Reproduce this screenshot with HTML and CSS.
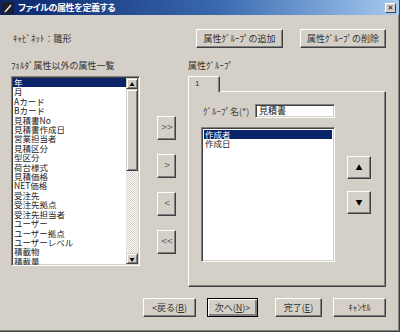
FILE: index.html
```html
<!DOCTYPE html>
<html>
<head>
  <meta charset="utf-8">
  <title>ファイルの属性を定義する</title>
  <link rel="stylesheet" href="styles.css">
</head>
<body>
  <div class="window">
    <div class="titlebar">
      <svg class="app-icon" width="12" height="12" viewBox="0 0 12 12">
        <rect width="12" height="12" fill="#1c1c2a"/>
        <path d="M3 10 L9 3" stroke="#e8e8f0" stroke-width="1.6"/>
        <path d="M2.5 10.5 L3.5 9" stroke="#a0a0c0" stroke-width="1"/>
      </svg>
      <span class="title">ファイルの属性を定義する</span>
      <span class="close">&#x2715;</span>
    </div>

    <div class="body">
      <div class="top-row">
        <span class="cabinet">ｷｬﾋﾞﾈｯﾄ：雛形</span>
        <button class="btn group-add">属性ｸﾞﾙｰﾌﾟの追加</button>
        <button class="btn group-del">属性ｸﾞﾙｰﾌﾟの削除</button>
      </div>

      <div class="main">
        <div class="col-left">
          <div class="label">ﾌｫﾙﾀﾞ属性以外の属性一覧</div>
          <div class="listbox attr-list">
            <ul class="items">
              <li class="selected">年</li>
              <li>月</li>
              <li>Aカード</li>
              <li>Bカード</li>
              <li>見積書No</li>
              <li>見積書作成日</li>
              <li>営業担当者</li>
              <li>見積区分</li>
              <li>型区分</li>
              <li>荷台様式</li>
              <li>見積価格</li>
              <li>NET価格</li>
              <li>受注先</li>
              <li>受注先拠点</li>
              <li>受注先担当者</li>
              <li>ユーザー</li>
              <li>ユーザー拠点</li>
              <li>ユーザーレベル</li>
              <li>積載物</li>
              <li>積載量</li>
            </ul>
            <div class="scrollbar">
              <div class="sb-btn">&#9650;</div>
              <div class="sb-thumb"></div>
              <div class="sb-track"></div>
              <div class="sb-btn">&#9660;</div>
            </div>
          </div>
        </div>

        <div class="col-arrows">
          <button class="btn move">&gt;&gt;</button>
          <button class="btn move">&gt;</button>
          <button class="btn move">&lt;</button>
          <button class="btn move">&lt;&lt;</button>
        </div>

        <div class="col-right">
          <div class="label">属性ｸﾞﾙｰﾌﾟ</div>
          <div class="tabs">
            <div class="tab">1</div>
          </div>
          <div class="panel">
            <div class="name-row">
              <span class="name-label">ｸﾞﾙｰﾌﾟ名(*)</span>
              <div class="textbox">見積書</div>
            </div>
            <div class="panel-main">
              <div class="listbox group-list">
                <ul class="items">
                  <li class="selected">作成者</li>
                  <li>作成日</li>
                </ul>
              </div>
              <div class="updown">
                <button class="btn order">&#9650;</button>
                <button class="btn order">&#9660;</button>
              </div>
            </div>
          </div>
        </div>
      </div>

      <div class="footer">
        <button class="btn back">&lt;戻る(<u>B</u>)</button>
        <button class="btn next default">次へ(<u>N</u>)&gt;</button>
        <button class="btn finish">完了(<u>E</u>)</button>
        <button class="btn cancel">ｷｬﾝｾﾙ</button>
      </div>
    </div>
  </div>
</body>
</html>
```

FILE: styles.css
```css
body {
  margin: 0;
  background-color: #d4d0c8;
  font-family: "Noto Sans CJK JP", "Liberation Sans", sans-serif;
  font-size: 9px;
  color: #222;
}
.window {
  width: 400px;
  height: 332px;
  box-sizing: border-box;
  background: #d4d0c8;
  border-right: 1px solid #404040;
  border-bottom: 1px solid #404040;
  box-shadow: inset -1px -1px #808080;
  display: flex;
  flex-direction: column;
}

/* title bar */
.titlebar {
  height: 15px;
  display: flex;
  align-items: center;
  background: linear-gradient(to right, #0a246a, #3a6ab0 55%, #a6caf0);
  color: #fff;
}
.app-icon {
  margin: 0 4px 0 2px;
}
.title {
  font-weight: bold;
  font-size: 9px;
  font-feature-settings: "palt";
  letter-spacing: -0.4px;
}
.close {
  margin-left: auto;
  margin-right: 3px;
  width: 11px;
  height: 10px;
  box-sizing: border-box;
  background: #d4d0c8;
  color: #000;
  font-size: 7px;
  line-height: 8px;
  text-align: center;
  font-family: "DejaVu Sans", sans-serif;
  font-weight: bold;
  border: 1px solid;
  border-color: #fff #404040 #404040 #fff;
}

/* buttons */
.btn {
  box-sizing: border-box;
  margin: 0;
  padding: 0;
  background: #d4d0c8;
  border: 1px solid;
  border-color: #fff #404040 #404040 #fff;
  box-shadow: inset -1px -1px #808080;
  font-family: inherit;
  font-size: 9px;
  color: #333;
  line-height: 1;
}
.btn u {
  text-decoration: underline;
}
.btn.default {
  border: 1px solid #000;
  box-shadow: inset 1px 1px #fff, inset -2px -2px #808080, inset -1px -1px #404040;
}

.body {
  flex: 1;
  display: flex;
  flex-direction: column;
}

.top-row {
  display: flex;
  align-items: center;
  margin-top: 14px;
  height: 19px;
}
.cabinet {
  margin-left: 13px;
  width: 183px;
  color: #333;
}
.group-add {
  width: 87px;
  height: 19px;
}
.group-del {
  width: 86px;
  height: 19px;
  margin-left: 17px;
}

/* main area */
.main {
  display: flex;
  margin-top: 12px;
}
.label {
  height: 12px;
  line-height: 12px;
  margin-bottom: 4px;
  color: #333;
  white-space: nowrap;
}
.col-left {
  margin-left: 11px;
  width: 129px;
}
.listbox {
  box-sizing: border-box;
  background: #fff;
  border: 1px solid;
  border-color: #808080 #fff #fff #808080;
  box-shadow: inset 1px 1px #404040, inset -1px -1px #d4d0c8;
  overflow: hidden;
}
.items {
  list-style: none;
  margin: 0;
  padding: 0;
  font-size: 8.5px;
  line-height: 9.4px;
  color: #222;
}
.items li {
  padding-left: 1px;
  white-space: nowrap;
}
.items li.selected {
  background: #0a246a;
  color: #fff;
}
.attr-list {
  height: 190px;
  display: flex;
  padding: 1px;
}
.attr-list .items {
  flex: 1;
}
.scrollbar {
  width: 12px;
  display: flex;
  flex-direction: column;
}
.sb-btn,
.sb-thumb {
  box-sizing: border-box;
  background: #d4d0c8;
  border: 1px solid;
  border-color: #d4d0c8 #404040 #404040 #d4d0c8;
  box-shadow: inset 1px 1px #fff, inset -1px -1px #808080;
}
.sb-btn {
  height: 11px;
  font-size: 5px;
  line-height: 9px;
  text-align: center;
  color: #000;
}
.sb-thumb {
  height: 82px;
}
.sb-track {
  flex: 1;
  background: repeating-conic-gradient(#d4d0c8 0 25%, #fff 0 50%) 0 0 / 2px 2px;
}

.col-arrows {
  margin-left: 17px;
  width: 19px;
  display: flex;
  flex-direction: column;
  padding-top: 56px;
  gap: 14px;
}
.move {
  width: 19px;
  height: 24px;
  font-size: 8px;
  color: #666;
  font-family: "DejaVu Sans", sans-serif;
  letter-spacing: -1px;
}

.col-right {
  margin-left: 12px;
  width: 198px;
}
.tabs {
  display: flex;
  height: 15px;
}
.tab {
  width: 32px;
  box-sizing: border-box;
  border: 1px solid;
  border-color: #fff #404040 transparent #fff;
  border-bottom: none;
  box-shadow: inset -1px 0 #808080;
  padding: 2px 0 0 6px;
  font-size: 8px;
  font-family: "Liberation Sans", sans-serif;
  color: #333;
  margin-bottom: -1px;
  background: #d4d0c8;
  position: relative;
}
.panel {
  height: 196px;
  box-sizing: border-box;
  border: 1px solid;
  border-color: #fff #404040 #404040 #fff;
  box-shadow: inset -1px -1px #808080;
  padding: 12px 0 0 12px;
}
.name-row {
  display: flex;
  align-items: center;
  height: 14px;
}
.name-label {
  margin-left: 2px;
  width: 52px;
  color: #444;
}
.textbox {
  width: 80px;
  height: 14px;
  box-sizing: border-box;
  background: #fff;
  border: 1px solid;
  border-color: #808080 #fff #fff #808080;
  box-shadow: inset 1px 1px #404040, inset -1px -1px #d4d0c8;
  padding: 0 0 0 3px;
  font-size: 9px;
  line-height: 12px;
  color: #111;
}
.panel-main {
  display: flex;
  margin-top: 9px;
}
.group-list {
  width: 134px;
  height: 135px;
  padding: 2px;
}
.updown {
  margin-left: 12px;
  display: flex;
  flex-direction: column;
  padding-top: 29px;
  gap: 12px;
}
.order {
  width: 24px;
  height: 23px;
  font-size: 7px;
  color: #000;
}

/* footer */
.footer {
  display: flex;
  margin-top: 11px;
  padding-left: 143px;
  height: 19px;
}
.footer .btn {
  height: 19px;
}
.back {
  width: 53px;
}
.next {
  width: 51px;
  margin-left: 11px;
}
.finish {
  width: 47px;
  margin-left: 17px;
}
.cancel {
  width: 53px;
  margin-left: 11px;
}
```
